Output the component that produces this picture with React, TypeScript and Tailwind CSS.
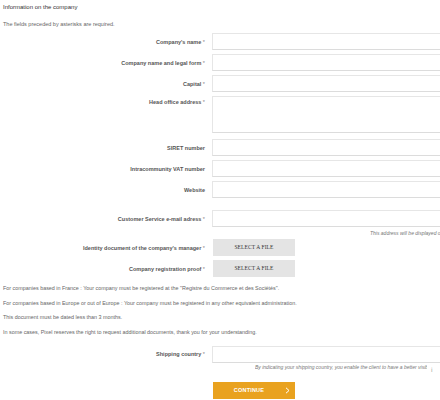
import React from 'react';

type Field = {
  label: string;
  required?: boolean;
  tall?: boolean;
};

const fieldsTop: Field[] = [
  { label: "Company's name", required: true },
  { label: 'Company name and legal form', required: true },
  { label: 'Capital', required: true },
  { label: 'Head office address', required: true, tall: true },
  { label: 'SIRET number' },
  { label: 'Intracommunity VAT number' },
  { label: 'Website' },
];

const notes = [
  'For companies based in France : Your company must be registered at the "Registre du Commerce et des Sociétés".',
  'For companies based in Europe or out of Europe : Your company must be registered in any other equivalent administration.',
  'This document must be dated less than 3 months.',
  'In some cases, Pixel reserves the right to request additional documents, thank you for your understanding.',
];

function Label({ text, required }: { text: string; required?: boolean }) {
  return (
    <div className="w-[205px] shrink-0 text-right text-[5.5px] leading-[8px] font-bold text-[#555] whitespace-nowrap">
      {text}
      {required && <span className="text-[#888] font-normal"> *</span>}
    </div>
  );
}

function InputBox({ tall }: { tall?: boolean }) {
  return (
    <div
      className={
        'ml-[7px] w-[260px] shrink-0 bg-white border border-[#e6e6e6] border-b-[#dcdcdc] ' +
        (tall ? 'h-[37px]' : 'h-[17px]')
      }
    />
  );
}

function FileButton() {
  return (
    <button className="ml-[8px] w-[82px] h-[17px] shrink-0 bg-[#e4e4e4] text-[#333] text-[5.5px] font-['Liberation_Serif',serif] tracking-[0.1px]">
      SELECT A FILE
    </button>
  );
}

export default function App() {
  return (
    <div className="w-[440px] h-[400px] overflow-hidden bg-white text-[#666] font-['Liberation_Sans',Arial,sans-serif]">
      <p className="pl-[3px] pt-[3px] text-[6px] leading-[8px] text-[#333]">Information on the company</p>
      <p className="mt-[9px] pl-[3px] text-[5.5px] leading-[8px]">The fields preceded by asterisks are required.</p>

      <div className="mt-[5px] flex flex-col">
        {fieldsTop.map((f, i) => (
          <div
            key={f.label}
            className={
              'flex ' +
              (f.tall ? 'items-start mb-[6px]' : 'items-center') +
              (i === fieldsTop.length - 1 ? ' mb-[12px]' : f.tall ? '' : ' mb-[4px]')
            }
          >
            <div className={f.tall ? 'pt-[2px]' : ''}>
              <Label text={f.label} required={f.required} />
            </div>
            <InputBox tall={f.tall} />
          </div>
        ))}

        <div className="flex items-center">
          <Label text="Customer Service e-mail adress" required />
          <InputBox />
        </div>
        <div className="ml-[370px] h-[10px] pt-[2px] w-[70px] overflow-hidden">
          <p className="text-[5px] leading-[8px] italic whitespace-nowrap text-[#777]">
            This address will be displayed on your shop page
          </p>
        </div>

        <div className="mt-[2px] flex items-center">
          <Label text="Identity document of the company's manager" required />
          <FileButton />
        </div>
        <div className="mt-[4px] flex items-center">
          <Label text="Company registration proof" required />
          <FileButton />
        </div>
      </div>

      <div className="mt-[7px] pl-[3px] flex flex-col gap-[6.5px]">
        {notes.map((n) => (
          <p key={n} className="text-[5.4px] leading-[8px] whitespace-nowrap">
            {n}
          </p>
        ))}
      </div>

      <div className="mt-[10px] flex items-center">
        <Label text="Shipping country" required />
        <InputBox />
      </div>
      <div className="flex items-start h-[8px]">
        <div className="ml-[255px] w-[172px] overflow-hidden">
          <p className="text-[5px] leading-[8px] italic whitespace-nowrap text-[#777]">
            By indicating your shipping country, you enable the client to have a better visibility
          </p>
        </div>
        <span className="ml-[4px] mt-[4px] text-[6px] leading-[6px] text-[#999]">{'\u2139'}</span>
      </div>

      <button className="mt-[11px] ml-[213px] w-[82px] h-[17px] bg-[#e9a21f] text-white flex items-center relative">
        <span className="flex-1 text-center text-[5.5px] font-bold tracking-[0.2px] pr-[10px]">CONTINUE</span>
        <svg className="absolute right-[5px] top-[5px]" width="5" height="7" viewBox="0 0 5 7" fill="none">
          <path d="M1 0.8 L4 3.5 L1 6.2" stroke="white" strokeWidth="1" />
        </svg>
      </button>
    </div>
  );
}
